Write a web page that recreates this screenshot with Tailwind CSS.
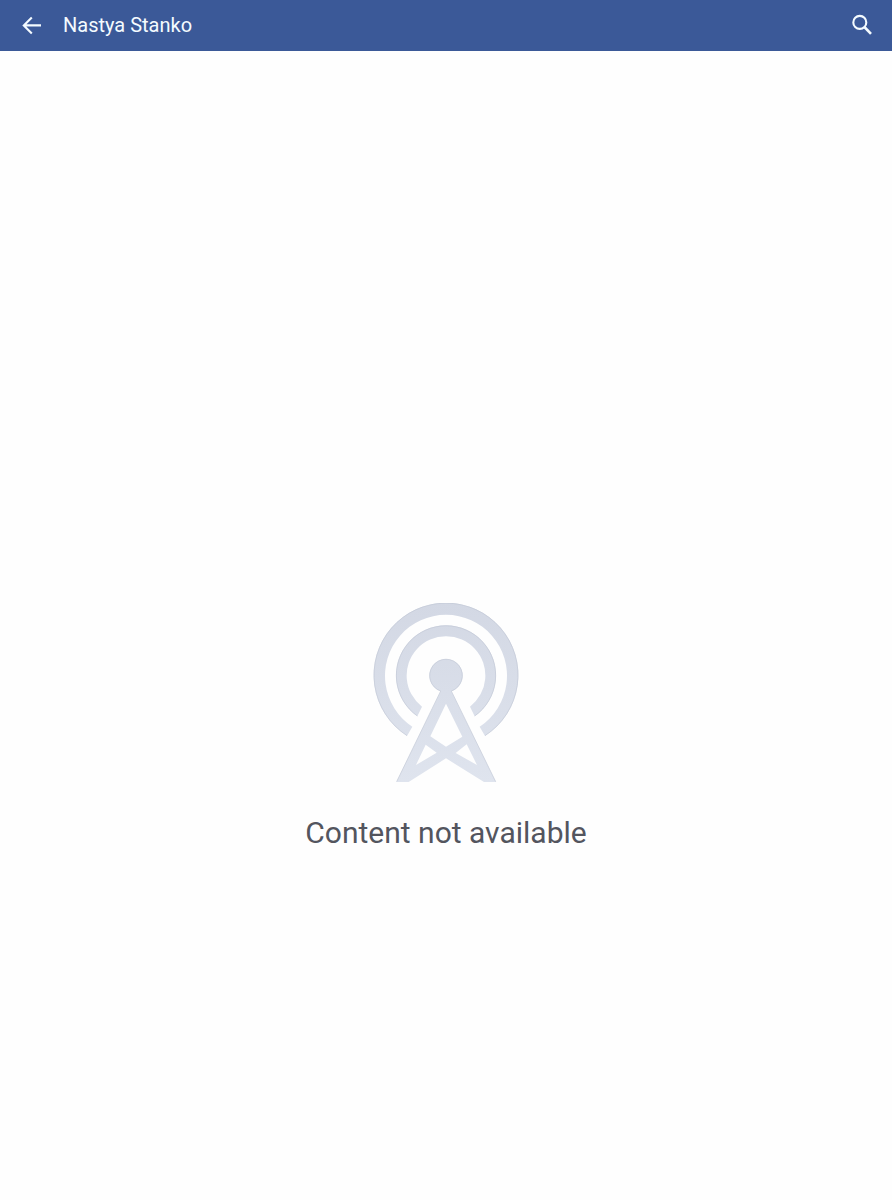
<!DOCTYPE html>
<html lang="en">
<head>
<meta charset="utf-8">
<meta name="viewport" content="width=device-width, initial-scale=1">
<title>Nastya Stanko</title>
<script src="https://cdn.jsdelivr.net/npm/@tailwindcss/browser@4"></script>
</head>
<body class="flex min-h-screen flex-col bg-[#fefefe] font-['Roboto',sans-serif]">
<header class="flex h-[51px] shrink-0 items-center bg-[#3b5998] pr-[18px] pb-0.5 pl-5 text-[#f4fbff]">
  <button type="button" aria-label="Back" class="flex size-6 items-center justify-center">
    <svg class="size-6" viewBox="0 0 24 24" fill="none" stroke="currentColor" stroke-width="2.1" aria-hidden="true"><path d="M21 12.4H4M11.8 4.4l-8 8 8 8"/></svg>
  </button>
  <h1 class="ml-[19px] flex-1 text-xl">Nastya Stanko</h1>
  <button type="button" aria-label="Search" class="flex size-6 items-center justify-center">
    <svg class="size-6" viewBox="0 0 24 24" fill="none" stroke="currentColor" aria-hidden="true"><circle cx="9.8" cy="9.4" r="6.5" stroke-width="2.1"/><path d="M14.4 14l6.6 6.8" stroke-width="2.6"/></svg>
  </button>
</header>
<main class="flex flex-1 flex-col items-center pt-[552px]">
  <svg class="h-[180px] w-[146px]" viewBox="33 33 438 540" aria-hidden="true">
    <defs><linearGradient id="tower" gradientUnits="userSpaceOnUse" x1="0" y1="32" x2="0" y2="572"><stop offset="0" stop-color="#d3d8e4"/><stop offset="1" stop-color="#dfe4ee"/></linearGradient></defs>
    <g fill="url(#tower)">
      <path d="M135 432A217 217 0 1 1 369 432L353 404A183 183 0 1 0 151 404Z"/>
      <path d="M166 373A150 150 0 1 1 338 373L324 344A118 118 0 1 0 180 344Z"/>
      <path fill-rule="evenodd" d="M236 298A50 50 0 1 1 268 298L402 570H366L252 499L140 570H103ZM252 335L205 433L252 464L301 434ZM191 458L162 519L224 482ZM314 457L281 483L345 519Z"/>
    </g>
    <g fill="none" stroke="#c3c9d6" stroke-width="2">
      <path d="M135 431A216 216 0 1 1 369 431"/>
      <path d="M166 372A149 149 0 1 1 338 372"/>
      <path d="M236 297A49 49 0 1 1 268 297L401 569M236 297L104 569"/>
    </g>
  </svg>
  <p class="mt-8 text-3xl text-[#53555e]">Content not available</p>
</main>
</body>
</html>
